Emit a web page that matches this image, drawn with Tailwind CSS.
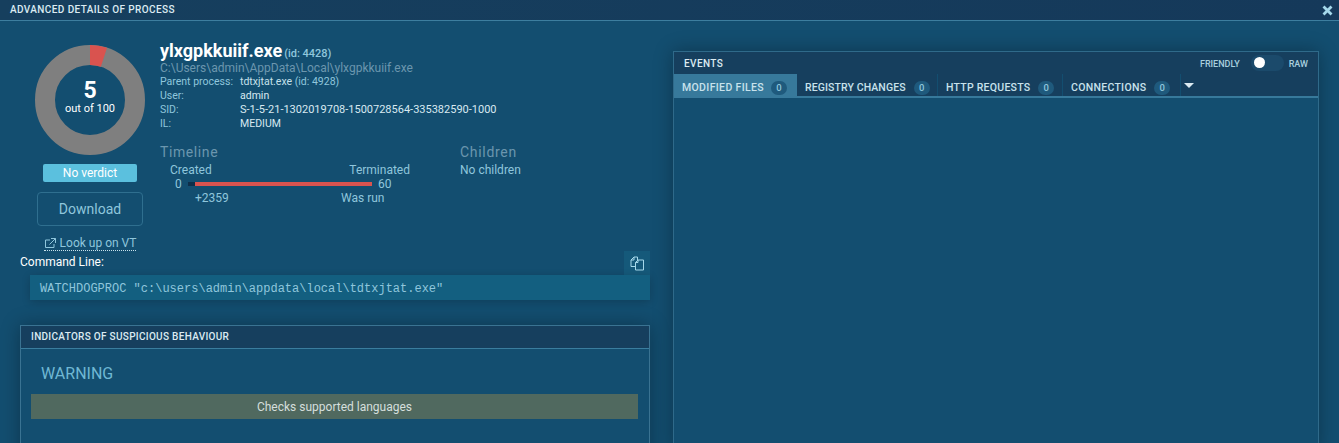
<!DOCTYPE html>
<html lang="en">
<head>
    <meta charset="UTF-8">
    <title>Advanced details of process</title>
    <script src="https://cdn.jsdelivr.net/npm/@tailwindcss/browser@4"></script>
</head>
<body class="w-[1339px] h-[443px] overflow-hidden bg-[#134e70] font-['Roboto','Liberation_Sans',sans-serif] text-[#8fc6dc]">

    <header class="h-[21px] bg-gradient-to-r from-[#163f5e] to-[#15395a] border-b border-[#3d7e9f] flex items-center justify-between pl-[10px] pr-[6px]">
        <div class="text-[10px] leading-none font-medium tracking-[0.4px] text-[#dcebf2]">ADVANCED DETAILS OF PROCESS</div>
        <svg class="w-[11px] h-[11px]" viewBox="0 0 11 11" aria-hidden="true"><path d="M1.5 1.5l8 8M9.5 1.5l-8 8" stroke="#a5d8ea" stroke-width="2.8"/></svg>
    </header>

    <main class="flex pl-[20px] h-[422px] overflow-hidden">
        <div class="w-[630px] shrink-0">
            <div class="flex pt-[24px] h-[230px]">
                <div class="w-[140px] shrink-0 flex flex-col items-center">
                    <div class="relative w-[110px] h-[110px]">
                        <svg class="w-[110px] h-[110px]" viewBox="0 0 110 110" aria-hidden="true">
                            <circle cx="55" cy="55" r="45" fill="none" stroke="#7f7f7f" stroke-width="20"/>
                            <path d="M55 0A55 55 0 0 1 72 2.7L65.8 21.7A35 35 0 0 0 55 20Z" fill="#d9534f"/>
                        </svg>
                        <div class="absolute inset-0 flex flex-col items-center justify-center text-white">
                            <div class="text-[23px] leading-[23px] font-bold mt-[-5px]">5</div>
                            <div class="text-[11px] leading-[14px]">out of 100</div>
                        </div>
                    </div>
                    <div class="mt-[9px] w-[94px] h-[18px] rounded-[2px] bg-[#5bc0de] text-[12px] leading-[18px] text-center text-white">No verdict</div>
                    <div class="mt-[10px] w-[106px] h-[34px] rounded-[4px] border border-[#2f6f8f] text-[14px] leading-[32px] text-center text-[#8fc6dc]">Download</div>
                    <div class="mt-[10px] flex items-center gap-[3px] h-[15px] border-b border-dotted border-[#c8e2ec] text-[12px] leading-[14px]">
                        <svg class="w-[13px] h-[12px]" viewBox="0 0 13 12" fill="none" stroke="#8fc6dc" aria-hidden="true"><path d="M10 7v3.5H1.5V3H6M7 1.5h4.5V6M11.5 1.5L5.5 7.5"/></svg>
                        Look up on VT
                    </div>
                </div>
                <div class="grow">
                    <div class="flex items-baseline h-[18px] mt-[-3px]">
                        <span class="text-[18px] leading-[18px] font-bold text-white">ylxgpkkuiif.exe</span>
                        <span class="ml-[2px] text-[11px] font-medium text-[#8fc6dc]">(id: 4428)</span>
                    </div>
                    <div class="text-[12px] leading-[14px] mt-[1px] text-[#6b96ae]">C:\Users\admin\AppData\Local\ylxgpkkuiif.exe</div>
                    <div class="grid grid-cols-[80px_1fr] text-[10.5px] leading-[14px]">
                        <span class="text-[#8fc6dc]">Parent process:</span><span class="text-[#c6e0ea]">tdtxjtat.exe <span class="text-[#8fc6dc]">(id: 4928)</span></span>
                        <span class="text-[#8fc6dc]">User:</span><span class="text-[#d8e9f0]">admin</span>
                        <span class="text-[#8fc6dc]">SID:</span><span class="text-[11px] text-[#d8e9f0]">S-1-5-21-1302019708-1500728564-335382590-1000</span>
                        <span class="text-[#8fc6dc]">IL:</span><span class="text-[#d8e9f0]">MEDIUM</span>
                    </div>
                    <div class="flex mt-[13px]">
                        <div class="w-[300px] shrink-0">
                            <div class="text-[14px] leading-[16px] tracking-[0.6px] text-[#6b96ae]">Timeline</div>
                            <div class="relative w-[240px] h-[42px] mt-[3px] ml-[10px] text-[12px] leading-[14px]">
                                <div class="flex justify-between">
                                    <span>Created</span><span>Terminated</span>
                                </div>
                                <div class="flex items-center h-[14px]">
                                    <span class="w-[18px] pl-[5px]">0</span>
                                    <span class="w-[7px] h-[4px] bg-[#0f2f4a]"></span>
                                    <span class="w-[177px] h-[4px] bg-[#d9534f]"></span>
                                    <span class="ml-[6px]">60</span>
                                </div>
                                <div class="flex pl-[25px]">
                                    <span class="w-[146px]">+2359</span><span>Was run</span>
                                </div>
                            </div>
                        </div>
                        <div>
                            <div class="text-[14px] leading-[16px] tracking-[0.7px] text-[#6b96ae]">Children</div>
                            <div class="text-[12px] leading-[14px] mt-[3px]">No children</div>
                        </div>
                    </div>
                </div>
            </div>

            <div class="relative h-[45px] mt-[4px]">
                <div class="text-[12px] leading-[14px] text-white">Command Line:</div>
                <div class="absolute right-0 top-[-4px] w-[26px] h-[24px] bg-[#15597a] flex items-center justify-center">
                    <svg class="w-[15px] h-[15px]" viewBox="0 0 15 15" fill="none" stroke="#a5d8ea" aria-hidden="true"><path d="M5.5 10.5H1V4l3-3h3.5v3M4 1v3H1M5.5 6.5l2.5-2.5h5.5v10h-8zM8 4v2.500H5.500"/></svg>
                </div>
                <div class="absolute left-[10px] right-0 top-[20px] h-[25px] bg-[#135f80] shadow-[0_2px_8px_rgba(0,0,0,0.2)] pl-[10px] pt-[2px] font-['Liberation_Mono',monospace] text-[12px] leading-[25px] text-[#8fc6dc]">WATCHDOGPROC "c:\users\admin\appdata\local\tdtxjtat.exe"</div>
            </div>

            <section class="mt-[25px] h-[200px] border border-[#3a7392] shadow-[0_0_18px_rgba(0,0,0,0.3)]">
                <div class="h-[23px] bg-[#163f5e] border-b border-[#3a7d9e] pl-[10px] text-[10px] leading-[22px] font-medium tracking-[0.3px] text-[#dcebf2]">INDICATORS OF SUSPICIOUS BEHAVIOUR</div>
                <div class="pl-[10px] pr-[11px]">
                    <div class="pl-[10px] mt-[15px] text-[16px] leading-[20px] text-[#6fb8d4]">WARNING</div>
                    <div class="mt-[10px] h-[25px] bg-[#50695f] text-center text-[12px] leading-[26px] text-[#d5dfdc]">Checks supported languages</div>
                </div>
            </section>
        </div>

        <section class="ml-[23px] mt-[30px] w-[646px] h-[400px] shrink-0 border border-[#2f6a8a] shadow-[0_0_18px_rgba(0,0,0,0.3)]">
            <div class="h-[22px] bg-[#163f5e] flex items-center justify-between pl-[10px] pr-[10px]">
                <span class="text-[10px] font-medium tracking-[0.4px] text-[#dcebf2]">EVENTS</span>
                <div class="flex items-center text-[9px] leading-[18px] font-medium text-[#a9cfdf]">
                    <span class="pt-[1px]">FRIENDLY</span>
                    <span class="relative ml-[11px] mr-[5px] w-[33px] h-[16px] rounded-full bg-[#1b4a6b]">
                        <span class="absolute left-[3px] top-[2px] w-[11px] h-[11px] rounded-full bg-white"></span>
                    </span>
                    <span class="pt-[1px]">RAW</span>
                </div>
            </div>
            <nav class="h-[24px] bg-[#163f5e] border-b-2 border-[#37799b] flex text-[10.5px] font-medium text-[#c8e2ec]">
                <div class="h-[22px] flex items-center w-[123px] pl-[8px] pt-[5px] bg-[#37799b] tracking-[0.35px]">MODIFIED FILES<span class="ml-[7px] w-[16px] h-[14px] rounded-full bg-[#1f5a7d] text-center text-[9.5px] leading-[14px] text-[#8fc6dc]">0</span></div>
                <div class="h-[22px] flex items-center w-[141px] pl-[8px] pt-[5px] border-r border-[#134e70] tracking-[0.1px]">REGISTRY CHANGES<span class="ml-[8px] w-[16px] h-[14px] rounded-full bg-[#1f5a7d] text-center text-[9.5px] leading-[14px] text-[#8fc6dc]">0</span></div>
                <div class="h-[22px] flex items-center w-[125px] pl-[8px] pt-[5px] border-r border-[#134e70] tracking-[0.25px]">HTTP REQUESTS<span class="ml-[8px] w-[16px] h-[14px] rounded-full bg-[#1f5a7d] text-center text-[9.5px] leading-[14px] text-[#8fc6dc]">0</span></div>
                <div class="h-[22px] flex items-center w-[118px] pl-[8px] pt-[5px] border-r border-[#134e70] tracking-[0.3px]">CONNECTIONS<span class="ml-[8px] w-[16px] h-[14px] rounded-full bg-[#1f5a7d] text-center text-[9.5px] leading-[14px] text-[#8fc6dc]">0</span></div>
                <svg class="ml-[3px] mt-[9px] w-[10px] h-[5px]" viewBox="0 0 10 5" aria-hidden="true"><path d="M0 0h10L5 5z" fill="#dcebf2"/></svg>
            </nav>
        </section>
    </main>
</body>
</html>
